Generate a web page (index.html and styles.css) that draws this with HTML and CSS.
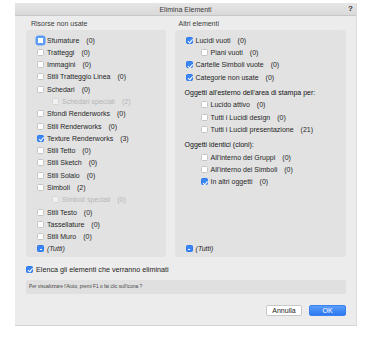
FILE: index.html
```html
<!DOCTYPE html>
<html lang="it">
<head>
    <meta charset="UTF-8">
    <title>Elimina Elementi</title>
    <link rel="stylesheet" href="styles.css">
</head>
<body>
    <div class="dialog">
        <div class="titlebar">
            <span class="title">Elimina Elementi</span>
            <span class="help">?</span>
        </div>

        <div class="content">
            <div class="groups">
                <div class="group group-left">
                    <div class="group-label">Risorse non usate</div>
                    <div class="panel">
                        <div class="row"><span class="cb focus"></span>Sfumature<span class="count">(0)</span></div>
                        <div class="row"><span class="cb"></span>Tratteggi<span class="count">(0)</span></div>
                        <div class="row"><span class="cb"></span>Immagini<span class="count">(0)</span></div>
                        <div class="row"><span class="cb"></span>Stili Tratteggio Linea<span class="count">(0)</span></div>
                        <div class="row"><span class="cb"></span>Schedari<span class="count">(0)</span></div>
                        <div class="row sub disabled"><span class="cb"></span>Schedari speciali<span class="count">(2)</span></div>
                        <div class="row"><span class="cb"></span>Sfondi Renderworks<span class="count">(0)</span></div>
                        <div class="row"><span class="cb"></span>Stili Renderworks<span class="count">(0)</span></div>
                        <div class="row"><span class="cb checked"></span>Texture Renderworks<span class="count">(3)</span></div>
                        <div class="row"><span class="cb"></span>Stili Tetto<span class="count">(0)</span></div>
                        <div class="row"><span class="cb"></span>Stili Sketch<span class="count">(0)</span></div>
                        <div class="row"><span class="cb"></span>Stili Solaio<span class="count">(0)</span></div>
                        <div class="row"><span class="cb"></span>Simboli<span class="count">(2)</span></div>
                        <div class="row sub disabled"><span class="cb"></span>Simboli speciali<span class="count">(0)</span></div>
                        <div class="row"><span class="cb"></span>Stili Testo<span class="count">(0)</span></div>
                        <div class="row"><span class="cb"></span>Tassellature<span class="count">(0)</span></div>
                        <div class="row"><span class="cb"></span>Stili Muro<span class="count">(0)</span></div>
                        <div class="row all"><span class="cb mixed"></span><em>(Tutti)</em></div>
                    </div>
                </div>

                <div class="group group-right">
                    <div class="group-label">Altri elementi</div>
                    <div class="panel">
                        <div class="row"><span class="cb checked"></span>Lucidi vuoti<span class="count">(0)</span></div>
                        <div class="row sub"><span class="cb"></span>Piani vuoti<span class="count">(0)</span></div>
                        <div class="row"><span class="cb checked"></span>Cartelle Simboli vuote<span class="count">(0)</span></div>
                        <div class="row"><span class="cb checked"></span>Categorie non usate<span class="count">(0)</span></div>
                        <div class="row heading">Oggetti all'esterno dell'area di stampa per:</div>
                        <div class="row sub"><span class="cb"></span>Lucido attivo<span class="count">(0)</span></div>
                        <div class="row sub"><span class="cb"></span>Tutti i Lucidi design<span class="count">(0)</span></div>
                        <div class="row sub"><span class="cb"></span>Tutti i Lucidi presentazione<span class="count">(21)</span></div>
                        <div class="row heading">Oggetti identici (cloni):</div>
                        <div class="row sub"><span class="cb"></span>All'interno dei Gruppi<span class="count">(0)</span></div>
                        <div class="row sub"><span class="cb"></span>All'interno dei Simboli<span class="count">(0)</span></div>
                        <div class="row sub"><span class="cb checked"></span>In altri oggetti<span class="count">(0)</span></div>
                        <div class="row all"><span class="cb mixed"></span><em>(Tutti)</em></div>
                    </div>
                </div>
            </div>

            <div class="row list-row"><span class="cb checked"></span>Elenca gli elementi che verranno eliminati</div>

            <div class="hint">Per visualizzare l'Aiuto, premi F1 o fai clic sull'icona ?</div>

            <div class="buttons">
                <button type="button" class="btn">Annulla</button>
                <button type="button" class="btn btn-ok">OK</button>
            </div>
        </div>
    </div>
</body>
</html>
```

FILE: styles.css
```css
body {
    margin: 0;
    padding: 0;
    background: #ffffff;
    font-family: "Liberation Sans", Arial, sans-serif;
    font-size: 7px;
    color: #262626;
}
.dialog {
    width: 342px;
    height: 323px;
    margin: 3px 0 0 15px;
    background: #ececec;
    box-sizing: border-box;
    border-right: 1px solid #dcdcdc;
    border-bottom: 1px solid #d4d4d4;
    display: flex;
    flex-direction: column;
}
.titlebar {
    height: 13px;
    background: linear-gradient(#e6e6e6, #d9d9d9);
    border-bottom: 1px solid #c6c6c6;
    box-sizing: border-box;
    display: flex;
    align-items: center;
    justify-content: center;
    position: relative;
}
.title {
    color: #3a3a3a;
}
.help {
    position: absolute;
    right: 3px;
    top: 1px;
    font-weight: bold;
    font-size: 8px;
    color: #333;
}
.content {
    padding: 4px 10px 0 11px;
    display: flex;
    flex-direction: column;
}
.groups {
    display: flex;
    gap: 9px;
}
.group-left {
    width: 140px;
}
.group-right {
    width: 172px;
}
.group-label {
    height: 8px;
    line-height: 8px;
    padding-left: 5px;
    margin-bottom: 2px;
    color: #3c3c3c;
}
.group-right .group-label {
    padding-left: 4px;
}
.panel {
    height: 227px;
    box-sizing: border-box;
    background: #e2e2e2;
    border-radius: 3px;
    padding: 4px 0 2px 11px;
    display: flex;
    flex-direction: column;
}
.row {
    height: 12.3px;
    display: flex;
    align-items: center;
    white-space: nowrap;
}
.row.sub {
    padding-left: 15px;
}
.row.disabled {
    color: #b6b6b6;
}
.row.heading {
    height: 13px;
    margin-top: 2.5px;
    color: #111;
    margin-left: -1px;
}
.row.all {
    margin-top: auto;
}
.row em {
    font-style: italic;
}
.count {
    margin-left: 7px;
}
.cb {
    width: 7px;
    height: 7px;
    margin-right: 3px;
    background: #ffffff;
    border: 0.5px solid #c4c4c4;
    border-radius: 1.5px;
    box-sizing: border-box;
    position: relative;
    flex: none;
}
.disabled .cb {
    background: #f1f1f1;
    border-color: #d6d6d6;
}
.cb.focus {
    box-shadow: 0 0 0 1.5px #5b9af5;
    border-color: #5b9af5;
}
.cb.checked,
.cb.mixed {
    background: #3a86f6;
    border-color: #2f78ea;
}
.cb.checked::after {
    content: "";
    position: absolute;
    left: 2.2px;
    top: 0.5px;
    width: 1.6px;
    height: 3.6px;
    border-right: 1px solid #fff;
    border-bottom: 1px solid #fff;
    transform: rotate(40deg);
}
.cb.mixed::after {
    content: "";
    position: absolute;
    left: 1.5px;
    right: 1.5px;
    top: 2.7px;
    height: 1px;
    background: #fff;
}
.list-row {
    margin-top: 6px;
    font-size: 7.2px;
    color: #222;
}
.hint {
    margin-top: 4.7px;
    height: 14px;
    background: #e0e0e0;
    border-radius: 2px;
    font-size: 4.8px;
    line-height: 14px;
    padding-left: 3px;
    color: #444;
}
.buttons {
    display: flex;
    justify-content: flex-end;
    gap: 7px;
    margin-top: 11px;
}
.btn {
    width: 36px;
    height: 11px;
    padding: 0;
    font-family: inherit;
    font-size: 7px;
    background: #ffffff;
    color: #222;
    border: 1px solid #c8c8c8;
    border-radius: 2px;
    box-sizing: border-box;
}
.btn-ok {
    width: 37px;
    background: linear-gradient(#5a9df9, #2d78f0);
    border-color: #3a80ef;
    color: #ffffff;
}
```
